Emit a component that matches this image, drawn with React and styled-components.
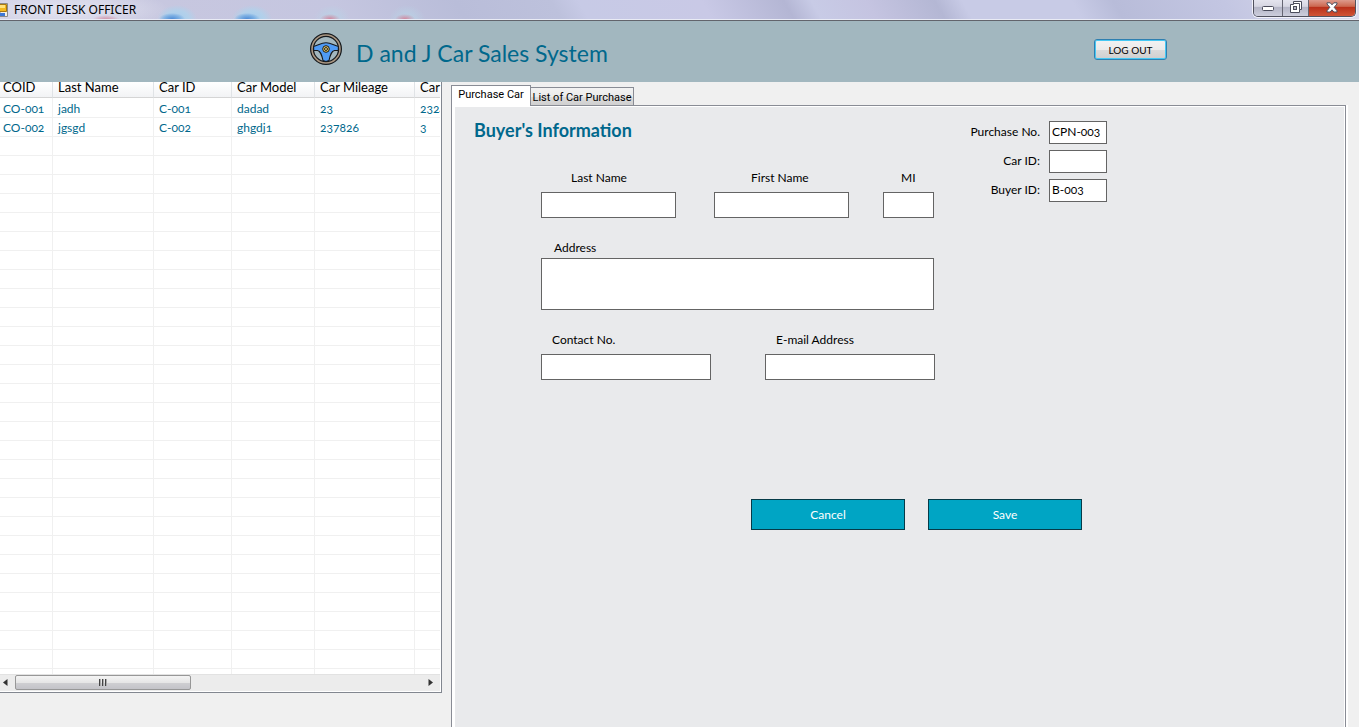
import React from "react";
import styled, { createGlobalStyle } from "styled-components";

const ink = "#00688c";

const GlobalStyle = createGlobalStyle`
  * { box-sizing: border-box; }
  body {
    margin: 0;
    background: #f0f0f0;
    color: #000;
    font: 12px/16px Lato, "Open Sans", sans-serif;
    font-variant-numeric: oldstyle-nums;
  }
  input, textarea, button { font: inherit; font-variant-numeric: inherit; }
`;

const Window = styled.div`
  min-height: 100vh;
  display: flex;
  flex-direction: column;
`;

const TitleBar = styled.header`
  height: 21px;
  flex: none;
  display: flex;
  align-items: flex-start;
  gap: 6px;
  padding-right: 3px;
  border-bottom: 1px solid #62646c;
  box-shadow: inset 0 -1px #e9ebf5;
  background:
    radial-gradient(ellipse 13px 6px at 172px 19px, #4f8cd6 0, #6aa3dfaa 60%, transparent 100%),
    radial-gradient(ellipse 20px 14px at 177px 19px, #a5cdee 0, #b3d0ea 60%, transparent 100%),
    radial-gradient(ellipse 13px 6px at 247px 19px, #4f8cd6 0, #6aa3dfaa 60%, transparent 100%),
    radial-gradient(ellipse 20px 14px at 252px 19px, #a5cdee 0, #b3d0ea 60%, transparent 100%),
    radial-gradient(ellipse 14px 5px at 106px 20px, #d1889f 0, transparent 100%),
    radial-gradient(ellipse 10px 5px at 330px 19px, #d1889f 0, transparent 100%),
    radial-gradient(ellipse 18px 14px at 332px 19px, #b9d3e6 0, transparent 100%),
    radial-gradient(ellipse 10px 5px at 405px 19px, #d1889f 0, transparent 100%),
    radial-gradient(ellipse 18px 14px at 407px 19px, #b9d3e6 0, transparent 100%),
    radial-gradient(ellipse 110px 22px at 60px 10px, #e2e3f0 0, #e2e3f088 60%, transparent 100%),
    linear-gradient(60deg, #c9c8df 0, #c5c6e0 25%, #b9bdd9 34%, #bdc1dc 41%, #c7cae6 43%, #c9c9e6 52%, #b4b6d4 58%, #c8cbe6 60%, #c5c4e1 64%, #b4b7d4 69%, #c8cbe6 71%, #c8cbe6 79%, #b8bcd9 82%, #c3c6e2 90%, #dcdcee 100%);
`;

const AppGlyph = styled.svg`
  width: 8px;
  height: 14px;
  margin-top: 3px;
`;

const WindowTitle = styled.span`
  flex: 1;
  font: 12px/20px "Noto Sans", sans-serif;
`;

const WindowControls = styled.div`
  display: flex;
  height: 17px;
  border: 1px solid #51525f;
  border-top: 0;
  border-radius: 0 0 5px 5px;
  overflow: hidden;
  box-shadow: 0 0 0 1px #f2f2fa;
`;

const WindowButton = styled.button`
  width: ${(p) => (p.$close ? 47 : p.$wide ? 28 : 26)}px;
  display: grid;
  place-items: center;
  padding: 0 0 ${(p) => (p.$wide ? 0 : 2)}px;
  border: 0;
  border-left: ${(p) => (p.$wide ? 0 : "1px solid #656572")};
  background: ${(p) =>
    p.$close
      ? "linear-gradient(#dd9a8c 0, #cc6850 40%, #b9301a 45%, #d05436 100%)"
      : "linear-gradient(#e4e4ee 0, #d6d6e2 40%, #b4b5c6 45%, #cdcedc 100%)"};
`;

const Banner = styled.div`
  height: 61px;
  flex: none;
  display: flex;
  align-items: center;
  padding: 0 192px 0 310px;
  background: #a2b7bf;
`;

const WheelIcon = styled.svg`
  width: 32px;
  height: 32px;
  margin-bottom: 5px;
`;

const BannerTitle = styled.h1`
  flex: 1;
  margin: 2px 0 0 14px;
  font-size: 23px;
  line-height: 30px;
  font-weight: 400;
  color: ${ink};
  white-space: nowrap;
`;

const LogoutButton = styled.button`
  width: 73px;
  height: 21px;
  margin-bottom: 4px;
  padding: 0;
  border: 1px solid #2f7fb0;
  border-radius: 3px;
  box-shadow: inset 0 0 0 1px #45c8f4;
  background: linear-gradient(#f2f2f2 0, #ebebeb 50%, #dcdcdc 50%, #cfcfcf 100%);
  font-size: 10px;
  line-height: 16px;
`;

const Workspace = styled.main`
  flex: 1;
  display: flex;
  align-items: stretch;
  padding-right: 13px;
`;

const CarList = styled.section`
  width: 442px;
  flex: none;
  align-self: flex-start;
  padding: 0 1px 1px 0;
  border: solid #828790;
  border-width: 0 1px 1px 0;
  background: #fff;
`;

const CarTable = styled.table`
  width: 100%;
  table-layout: fixed;
  border-collapse: separate;
  border-spacing: 0;
`;

const HeadCell = styled.th`
  height: 16px;
  padding: 0 0 5px ${(p) => (p.$first ? 3 : 5)}px;
  border-right: 1px solid #e0e3e6;
  border-bottom: 1px solid #d5d5d5;
  background: linear-gradient(#fff, #f2f3f5);
  font-size: 13px;
  font-weight: 400;
  line-height: 10px;
  text-align: left;
  white-space: nowrap;

  &:last-child { border-right: 0; }
`;

const Cell = styled.td`
  height: ${(p) => p.$height}px;
  padding: ${(p) => (p.$height > 5 ? 2 : 0)}px 0 0 ${(p) => (p.$first ? 3 : 5)}px;
  border-right: 1px solid #f0f0f0;
  border-bottom: ${(p) => (p.$height > 5 ? "1px solid #f0f0f0" : 0)};
  color: ${ink};
  line-height: 16px;
  white-space: nowrap;
  overflow: hidden;

  &:last-child { border-right: 0; }
`;

const ScrollTrack = styled.div`
  display: flex;
  align-items: center;
  height: 17px;
  padding: 0 7px 1px 3px;
  background: #ececec;
  border-top: 1px solid #e2e2e2;
`;

const ScrollArrow = styled.svg`
  width: 5px;
  height: 7px;
`;

const ScrollThumb = styled.div`
  width: 176px;
  height: 15px;
  margin: 0 auto 0 7px;
  display: flex;
  align-items: center;
  justify-content: center;
  gap: 1px;
  border: 1px solid #979797;
  border-radius: 2px;
  background: linear-gradient(#f4f4f4 0, #e6e6e6 50%, #d0d0d3 50%, #c3c3c8 100%);
`;

const Grip = styled.i`
  width: 2px;
  height: 7px;
  border-left: 1px solid #444;
  background: #aaa;
`;

const Tabs = styled.section`
  flex: 1;
  margin-left: 9px;
  padding-top: 3px;
  display: flex;
  flex-direction: column;
`;

const TabStrip = styled.div`
  display: flex;
  align-items: flex-end;
  height: 20px;
`;

const Tab = styled.button`
  position: relative;
  width: ${(p) => (p.$active ? 80 : 103)}px;
  height: ${(p) => (p.$active ? 21 : 18)}px;
  margin-bottom: ${(p) => (p.$active ? -1 : 0)}px;
  padding: ${(p) => (p.$active ? "0 0 2px" : "2px 0 0")};
  border: 1px solid #898c95;
  border-left-width: ${(p) => (p.$active ? 1 : 0)}px;
  border-bottom: 0;
  background: ${(p) =>
    p.$active ? "#fff" : "linear-gradient(#f2f2f2 0, #ebebeb 50%, #dddddd 50%, #d0d0d0 100%)"};
  font: 11px/14px Roboto, "Liberation Sans", sans-serif;
  white-space: nowrap;
`;

const TabPanel = styled.form`
  flex: 1;
  border: solid #898c95;
  border-width: 1px 1px 0;
  box-shadow: 2px 0 #fff, inset 3px 1px #fff, inset -1px 0 #fff;
  background: #e9eaec;
  padding: 1px 1px 0 3px;
`;

const PanelTop = styled.div`
  display: flex;
  align-items: flex-start;
`;

const BuyerSection = styled.div`
  width: 479px;
  padding-top: 11px;
`;

const SectionTitle = styled.h2`
  margin: 0 0 28px 19px;
  font-size: 18px;
  line-height: 24px;
  font-weight: 700;
  color: ${ink};
`;

const Fields = styled.div`
  display: flex;
  flex-direction: column;
  gap: 22px;
  padding-left: 86px;
`;

const NameRow = styled.div`
  display: grid;
  grid-template-columns: 173px 169px 51px;
`;

const ContactRow = styled.div`
  display: flex;
  gap: 54px;
`;

const Field = styled.label`
  display: flex;
  flex-direction: column;
  gap: ${(p) => p.$gap || 6}px;
`;

const FieldName = styled.span`
  padding-left: ${(p) => p.$indent}px;
`;

const TextBox = styled.input`
  width: ${(p) => p.$width}px;
  height: 26px;
  padding: 0 3px;
  border: 1px solid #646464;
  background: #fff;
`;

const AddressBox = styled.textarea`
  display: block;
  height: 52px;
  border: 1px solid #646464;
  background: #fff;
  resize: none;
`;

const Meta = styled.div`
  display: flex;
  flex-direction: column;
  gap: 6px;
  padding-top: 14px;
`;

const MetaField = styled.label`
  display: grid;
  grid-template-columns: 106px 58px;
  column-gap: 9px;
  line-height: 21px;
  text-align: right;
`;

const MetaBox = styled.input`
  width: 58px;
  height: 23px;
  padding: 0 2px 3px;
  border: 1px solid #646464;
  background: #fff;
`;

const Actions = styled.div`
  display: flex;
  gap: 23px;
  padding: 119px 0 0 296px;
`;

const ActionButton = styled.button`
  width: 154px;
  height: 31px;
  padding: 0;
  border: 1px solid #053b48;
  background: #00a5c4;
  color: #fff;
`;

const columns = [
  ["COID", 53],
  ["Last Name", 101],
  ["Car ID", 78],
  ["Car Model", 83],
  ["Car Mileage", 100],
  ["Car", 25],
];

const cars = [
  ["CO-001", "jadh", "C-001", "dadad", "23", "2324"],
  ["CO-002", "jgsgd", "C-002", "ghgdj1", "237826", "3"],
];

const rowCount = 31;
const rows = Array.from({ length: rowCount }, (_, i) => cars[i] || columns.map(() => ""));

const rowHeight = (index) => {
  if (index === 0) return 20;
  return index === rowCount - 1 ? 5 : 19;
};

function SteeringWheel() {
  return (
    <WheelIcon viewBox="0 0 32 32" aria-hidden="true">
      <circle cx="16" cy="16" r="14" fill="none" stroke="#15191d" strokeWidth="4" />
      <circle cx="16" cy="16" r="14" fill="none" stroke="#a99682" strokeWidth="1.6" />
      <path
        d="M3.6 13.5 C8 12.5 11 9.8 16 9.8 S24 12.5 28.4 13.5 L28.3 17.5 H24.5 C21.5 18 20.5 21 19 27.5 L16 28.5 L13 27.5 C11.5 21 10.5 18 7.5 17.5 H3.7 Z"
        fill="#4f9bf5"
        stroke="#15191d"
        strokeWidth="1.1"
        strokeLinejoin="round"
      />
      <circle cx="16" cy="16" r="3.3" fill="#f1cf62" stroke="#15191d" strokeWidth="1" />
      <circle cx="16" cy="16" r="1.5" fill="#e0c878" stroke="#15191d" strokeWidth=".9" />
    </WheelIcon>
  );
}

export default function App() {
  return (
    <>
      <GlobalStyle />
      <Window>
        <TitleBar>
          <AppGlyph viewBox="0 0 8 14" aria-hidden="true">
            <path d="M0 .5H7.5V13.5H0Z" fill="#f5f1e4" stroke="#8a8a8a" />
            <path d="M-1 1.5H6.5V8.5H-1Z" fill="#f3b81f" stroke="#a87810" />
            <path d="M0 2H5V5H0Z" fill="#ffe27a" />
            <path d="M0 10H5V13H0Z" fill="#3e78d6" />
          </AppGlyph>
          <WindowTitle>FRONT DESK OFFICER</WindowTitle>
          <WindowControls>
            <WindowButton type="button" $wide aria-label="Minimize">
              <svg width="12" height="6" viewBox="0 0 12 6">
                <rect x=".5" y="1.5" width="11" height="4" rx="1" fill="#fff" stroke="#4b4d5c" />
              </svg>
            </WindowButton>
            <WindowButton type="button" aria-label="Restore">
              <svg width="12" height="12" viewBox="0 0 12 12">
                <path d="M3.5 .5H11.5V8.5H9.5V11.5H.5V3.5H3.5Z" fill="#fff" stroke="#4b4d5c" />
                <path d="M3.5 2.5H9.5V8.5" fill="none" stroke="#4b4d5c" />
                <rect x="3.5" y="5.5" width="3" height="3" fill="#b9bac8" stroke="#4b4d5c" />
              </svg>
            </WindowButton>
            <WindowButton type="button" $close aria-label="Close">
              <svg width="12" height="11" viewBox="0 0 12 11">
                <path
                  d="M1 .8H4.2L6 2.8L7.8 .8H11V2L8.2 5.3L11 8.8V10H7.8L6 7.8L4.2 10H1V8.8L3.8 5.3L1 2Z"
                  fill="#fff"
                  stroke="#4b4d5c"
                />
              </svg>
            </WindowButton>
          </WindowControls>
        </TitleBar>

        <Banner>
          <SteeringWheel />
          <BannerTitle>D and J Car Sales System</BannerTitle>
          <LogoutButton type="button">LOG OUT</LogoutButton>
        </Banner>

        <Workspace>
          <CarList>
            <CarTable>
              <colgroup>
                {columns.map(([name, width]) => (
                  <col key={name} style={{ width }} />
                ))}
              </colgroup>
              <thead>
                <tr>
                  {columns.map(([name], i) => (
                    <HeadCell key={name} $first={i === 0}>
                      {name}
                    </HeadCell>
                  ))}
                </tr>
              </thead>
              <tbody>
                {rows.map((row, r) => (
                  <tr key={r}>
                    {row.map((value, i) => (
                      <Cell key={i} $first={i === 0} $height={rowHeight(r)}>
                        {value}
                      </Cell>
                    ))}
                  </tr>
                ))}
              </tbody>
            </CarTable>
            <ScrollTrack>
              <ScrollArrow viewBox="0 0 5 7">
                <path d="M4.5 0V7L0 3.5Z" fill="#333" />
              </ScrollArrow>
              <ScrollThumb>
                <Grip />
                <Grip />
                <Grip />
              </ScrollThumb>
              <ScrollArrow viewBox="0 0 5 7">
                <path d="M.5 0V7L5 3.5Z" fill="#333" />
              </ScrollArrow>
            </ScrollTrack>
          </CarList>

          <Tabs>
            <TabStrip role="tablist">
              <Tab type="button" role="tab" aria-selected="true" $active>
                Purchase Car
              </Tab>
              <Tab type="button" role="tab" aria-selected="false">
                List of Car Purchase
              </Tab>
            </TabStrip>
            <TabPanel>
              <PanelTop>
                <BuyerSection>
                  <SectionTitle>Buyer's Information</SectionTitle>
                  <Fields>
                    <NameRow>
                      <Field>
                        <FieldName $indent={30}>Last Name</FieldName>
                        <TextBox $width={135} />
                      </Field>
                      <Field>
                        <FieldName $indent={37}>First Name</FieldName>
                        <TextBox $width={135} />
                      </Field>
                      <Field>
                        <FieldName $indent={18}>MI</FieldName>
                        <TextBox $width={51} />
                      </Field>
                    </NameRow>
                    <Field $gap={2}>
                      <FieldName $indent={13}>Address</FieldName>
                      <AddressBox />
                    </Field>
                    <ContactRow>
                      <Field>
                        <FieldName $indent={11}>Contact No.</FieldName>
                        <TextBox $width={170} />
                      </Field>
                      <Field>
                        <FieldName $indent={11}>E-mail Address</FieldName>
                        <TextBox $width={170} type="email" />
                      </Field>
                    </ContactRow>
                  </Fields>
                </BuyerSection>
                <Meta>
                  <MetaField>
                    Purchase No.
                    <MetaBox defaultValue="CPN-003" />
                  </MetaField>
                  <MetaField>
                    Car ID:
                    <MetaBox />
                  </MetaField>
                  <MetaField>
                    Buyer ID:
                    <MetaBox defaultValue="B-003" />
                  </MetaField>
                </Meta>
              </PanelTop>
              <Actions>
                <ActionButton type="button">Cancel</ActionButton>
                <ActionButton type="submit">Save</ActionButton>
              </Actions>
            </TabPanel>
          </Tabs>
        </Workspace>
      </Window>
    </>
  );
}
